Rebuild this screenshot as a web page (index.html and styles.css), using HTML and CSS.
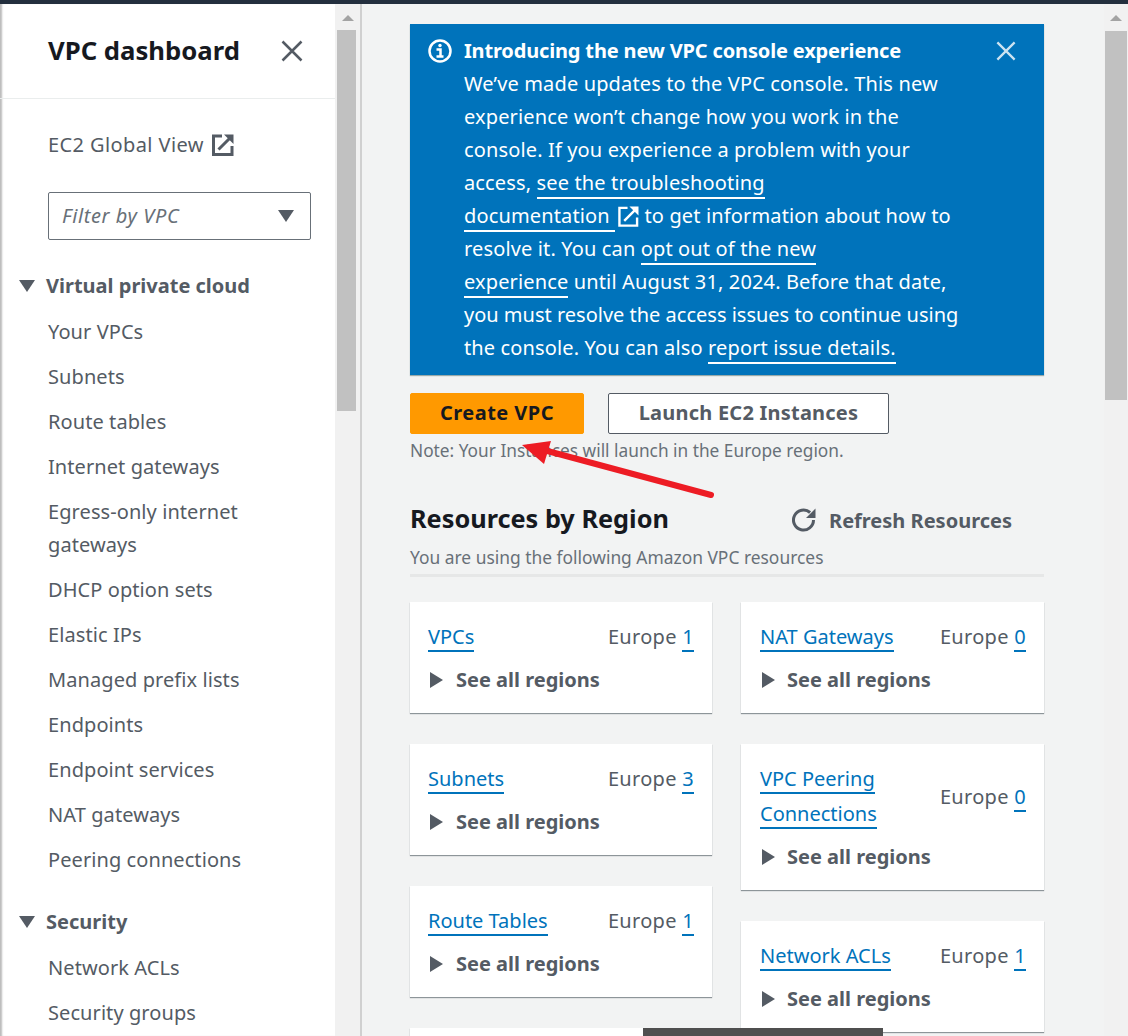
FILE: index.html
```html
<!DOCTYPE html>
<html lang="en">
	<head>
		<meta charset="utf-8">
		<title>VPC dashboard</title>
		<link rel="stylesheet" href="styles.css">
	</head>
	<body>
		<div class="topbar"></div>
		<div class="layout">
			<nav class="sidebar">
				<div class="side-head">
					<h2>VPC dashboard</h2>
					<svg class="side-close" viewBox="0 0 22 22"><path d="M1.500 1.500l19 19M20.500 1.500l-19 19"/></svg>
				</div>
				<div class="side-body">
					<p class="global">EC2 Global View
						<svg class="ext" viewBox="0 0 22 22"><path d="M10 2H1.500v18.500H20V12M6.500 15.500L18.500 3.500"/><path class="fill" d="M12 .5h9.500V10z"/></svg>
					</p>
					<div class="filter">
						<span>Filter by VPC</span>
						<i class="caret-down"></i>
					</div>
					<h3><i class="caret-small"></i>Virtual private cloud</h3>
					<a class="item">Your VPCs</a>
					<a class="item">Subnets</a>
					<a class="item">Route tables</a>
					<a class="item">Internet gateways</a>
					<a class="item">Egress-only internet<br>gateways</a>
					<a class="item">DHCP option sets</a>
					<a class="item">Elastic IPs</a>
					<a class="item">Managed prefix lists</a>
					<a class="item">Endpoints</a>
					<a class="item">Endpoint services</a>
					<a class="item">NAT gateways</a>
					<a class="item">Peering connections</a>
					<h3 class="second"><i class="caret-small"></i>Security</h3>
					<a class="item">Network ACLs</a>
					<a class="item">Security groups</a>
				</div>
			</nav>
			<div class="scrollbar side-bar">
				<i class="arrow-up"></i>
				<div class="thumb side-thumb"></div>
			</div>
			<main class="main">
				<div class="content">
					<section class="alert">
						<svg class="alert-icon" viewBox="0 0 24 24"><circle cx="12" cy="12" r="10.500"/><path d="M8.500 10.500h4v7M8.500 17.500h7"/><circle class="dot" cx="12" cy="6.500" r="1.700"/></svg>
						<div class="alert-text">
							<b>Introducing the new VPC console experience</b><br>
							We’ve made updates to the VPC console. This new<br>
							experience won’t change how you work in the<br>
							console. If you experience a problem with your<br>
							access, <a>see the troubleshooting</a><br>
							<a>documentation&nbsp;</a><svg class="ext-white" viewBox="0 0 22 22"><path d="M10 2H1.500v18.500H20V12M6.500 15.500L18.500 3.500"/><path class="fill" d="M12 .5h9.500V10z"/></svg> to get information about how to<br>
							resolve it. You can <a>opt out of the new</a><br>
							<a>experience</a> until August 31, 2024. Before that date,<br>
							<span class="tight">you must resolve the access issues to continue using</span><br>
							the console. You can also <a>report issue details.</a>
						</div>
						<svg class="alert-close" viewBox="0 0 22 22"><path d="M1.500 1.500l19 19M20.500 1.500l-19 19"/></svg>
					</section>

					<div class="actions">
						<button class="btn primary">Create VPC</button>
						<button class="btn">Launch EC2 Instances</button>
					</div>
					<p class="note">Note: Your Instances will launch in the Europe region.</p>

					<div class="res-head">
						<h2>Resources by Region</h2>
						<span class="refresh">
							<svg viewBox="0 0 24 24"><path d="M21.500 12a10 10 0 1 1-3.400-7.500"/><path class="fill" d="M23.500 .5v9.500H14z"/></svg>
							Refresh Resources
						</span>
					</div>
					<p class="res-sub">You are using the following Amazon VPC resources</p>

					<div class="cards">
						<div class="col">
							<div class="card">
								<div class="card-top"><div class="links"><a>VPCs</a></div><div class="count">Europe <a>1</a></div></div>
								<div class="see"><i class="caret-right"></i>See all regions</div>
							</div>
							<div class="card">
								<div class="card-top"><div class="links"><a>Subnets</a></div><div class="count">Europe <a>3</a></div></div>
								<div class="see"><i class="caret-right"></i>See all regions</div>
							</div>
							<div class="card">
								<div class="card-top"><div class="links"><a>Route Tables</a></div><div class="count">Europe <a>1</a></div></div>
								<div class="see"><i class="caret-right"></i>See all regions</div>
							</div>
							<div class="card"></div>
						</div>
						<div class="col col-right">
							<div class="card">
								<div class="card-top"><div class="links"><a>NAT Gateways</a></div><div class="count">Europe <a>0</a></div></div>
								<div class="see"><i class="caret-right"></i>See all regions</div>
							</div>
							<div class="card">
								<div class="card-top"><div class="links"><a>VPC Peering</a><br><a>Connections</a></div><div class="count">Europe <a>0</a></div></div>
								<div class="see"><i class="caret-right"></i>See all regions</div>
							</div>
							<div class="card">
								<div class="card-top"><div class="links"><a>Network ACLs</a></div><div class="count">Europe <a>1</a></div></div>
								<div class="see"><i class="caret-right"></i>See all regions</div>
							</div>
						</div>
					</div>
				</div>
				<div class="scrollbar main-bar">
					<i class="arrow-up"></i>
					<div class="thumb main-thumb"></div>
				</div>
			</main>
		</div>

		<!-- annotation drawn over the screenshot -->
		<svg class="red-arrow" viewBox="0 0 1128 1036"><path class="shaft" d="M711 495L540 449"/><path class="head" d="M522 445L551 441L544 464z"/></svg>
		<div class="toast"></div>
	</body>
</html>
```

FILE: styles.css
```css
* {
	box-sizing: border-box;
}
html, body {
	height: 100%;
}
body {
	margin: 0;
	height: 1036px;
	overflow: hidden;
	position: relative;
	font-family: "Noto Sans", sans-serif;
	font-size: 20px;
	line-height: 33px;
	color: #545b64;
	background-color: #f2f3f3;
	display: flex;
	flex-direction: column;
}
p, h2, h3 {
	margin: 0;
}
.fill {
	stroke: none;
}
.topbar {
	height: 4px;
	background-color: #232f3e;
	flex: none;
}
.layout {
	flex: 1;
	display: flex;
	min-height: 0;
	overflow: hidden;
}

/* sidebar */
.sidebar {
	width: 335px;
	flex: none;
	background-color: #fff;
	box-shadow: inset 3px 0 2px -1px #bbb;
	overflow: hidden;
	letter-spacing: 0.08px;
}
.side-head {
	height: 95px;
	border-bottom: 1px solid #eaeded;
	padding: 30px 32px 0 48px;
	display: flex;
	justify-content: space-between;
}
.side-head h2 {
	font-size: 25.7px;
	line-height: 34px;
	letter-spacing: 0;
	color: #16191f;
}
.side-close {
	width: 22px;
	height: 22px;
	margin-top: 6px;
	fill: none;
	stroke: #545b64;
	stroke-width: 2.500;
}
.side-body {
	padding: 29px 24px 0 48px;
	position: relative;
}
.global {
	display: flex;
	align-items: center;
	gap: 8px;
	letter-spacing: 0.4px;
}
.ext {
	width: 22px;
	height: 22px;
	fill: #545b64;
	stroke: #545b64;
	stroke-width: 3;
}
.ext path:first-child, .ext-white path:first-child {
	fill: none;
}
.filter {
	width: 263px;
	height: 48px;
	margin: 31px 0 29px;
	border: 1px solid #687078;
	border-radius: 2px;
	padding: 0 16px 2px 13px;
	display: flex;
	align-items: center;
	justify-content: space-between;
	font-style: italic;
	letter-spacing: 0.6px;
	color: #687078;
}
.caret-down {
	border-left: 8px solid transparent;
	border-right: 8px solid transparent;
	border-top: 12px solid #545b64;
	margin-top: 2px;
}
h3 {
	font-size: 20px;
	line-height: 33px;
	font-weight: bold;
	letter-spacing: 0;
	margin: 0 0 13px -2px;
	position: relative;
}
h3.second {
	margin-top: 29px;
}
.caret-small {
	position: absolute;
	left: -27px;
	top: 11px;
	border-left: 8px solid transparent;
	border-right: 8px solid transparent;
	border-top: 12px solid #545b64;
}
.item {
	display: block;
	margin-bottom: 12px;
}

/* scrollbars */
.scrollbar {
	width: 24px;
	flex: none;
	background-color: #f1f1f1;
	position: relative;
	padding: 26px 1px 0;
}
.side-bar {
	width: 27px;
	padding: 26px 4px 0 2px;
	border-right: 2px solid #d0d0d0;
}
.main-bar {
	margin-left: auto;
}
.thumb {
	background-color: #c1c1c1;
}
.side-thumb {
	height: 381px;
}
.main-thumb {
	height: 369px;
	margin-top: 1px;
}
.arrow-up {
	position: absolute;
	left: 6px;
	top: 11px;
	border-left: 6px solid transparent;
	border-right: 6px solid transparent;
	border-bottom: 6px solid #a3a3a3;
}
.side-bar .arrow-up {
	left: 7px;
}

/* main */
.main {
	flex: 1;
	min-width: 0;
	display: flex;
	padding-left: 48px;
}
.content {
	width: 634px;
	flex: none;
	padding-top: 20px;
}
.alert {
	background-color: #0073bb;
	color: #fff;
	height: 351px;
	padding: 10px 18px 11px 18px;
	display: flex;
	box-shadow: 0 1px 1px #9aa;
	position: relative;
}
.alert-icon {
	width: 24px;
	height: 24px;
	flex: none;
	margin: 5px 12px 0 0;
	fill: none;
	stroke: #fff;
	stroke-width: 2.500;
}
.alert-icon .dot {
	fill: #fff;
	stroke: none;
}
.alert-text {
	flex: 1;
	white-space: nowrap;
	letter-spacing: 0.14px;
}
.alert-text b {
	letter-spacing: -0.16px;
}
.alert-text .tight {
	letter-spacing: 0;
}
.alert-text a {
	border-bottom: 2px solid #fff;
	padding-bottom: 1px;
}
.ext-white {
	width: 21px;
	height: 21px;
	vertical-align: -4px;
	fill: #fff;
	stroke: #fff;
	stroke-width: 2.500;
	margin-left: 3px;
}
.alert-close {
	width: 20px;
	height: 20px;
	flex: none;
	margin: 7px 10px 0 0;
	fill: none;
	stroke: #fff;
	stroke-width: 2.500;
	opacity: 0.8;
}
.actions {
	display: flex;
	gap: 24px;
	margin-top: 18px;
}
.btn {
	height: 41px;
	width: 281px;
	font-family: inherit;
	font-size: 20px;
	font-weight: bold;
	letter-spacing: 0.22px;
	color: #545b64;
	background-color: #fff;
	border: 1px solid #545b64;
	border-radius: 2px;
	padding: 0 0 2px;
}
.btn.primary {
	width: 174px;
	letter-spacing: 0.45px;
	background-color: #ff9900;
	border-color: #ff9900;
	color: #16191f;
}
.note {
	font-size: 17.3px;
	line-height: 24px;
	margin-top: 5px;
	color: #687078;
}
.res-head {
	display: flex;
	justify-content: space-between;
	align-items: center;
	margin-top: 31px;
	height: 48px;
	padding-right: 32px;
}
.res-head h2 {
	font-size: 25.3px;
	color: #16191f;
}
.refresh {
	display: flex;
	align-items: center;
	gap: 13px;
	font-weight: bold;
	margin-top: 4px;
}
.refresh svg {
	width: 24px;
	height: 24px;
	fill: none;
	stroke: #545b64;
	stroke-width: 3;
}
.refresh .fill {
	fill: #545b64;
}
.res-sub {
	font-size: 17.4px;
	line-height: 24px;
	color: #687078;
	border-bottom: 3px solid #e6e7e7;
	padding: 3px 0 5px;
}
.cards {
	display: grid;
	grid-template-columns: 302px 303px;
	gap: 29px;
	margin-top: 25px;
}
.col {
	display: flex;
	flex-direction: column;
	gap: 31px;
}
.card {
	background-color: #fff;
	box-shadow: 0 1px 1px #8d9599;
	padding: 17px 18px 17px;
	min-height: 111px;
}
.col-right .card {
	padding-left: 19px;
}
.card-top {
	display: flex;
	justify-content: space-between;
	align-items: center;
	line-height: 35px;
	min-height: 35px;
}
.card a {
	color: #0073bb;
	border-bottom: 2px solid #0073bb;
}
.count {
	letter-spacing: 0.3px;
}
.see {
	font-weight: bold;
	line-height: 33px;
	margin-top: 9px;
	display: flex;
	align-items: center;
}
.caret-right {
	border-top: 8px solid transparent;
	border-bottom: 8px solid transparent;
	border-left: 13px solid #545b64;
	margin: 0 13px 0 2px;
}
.col-right .caret-right {
	margin-right: 12px;
}

/* over everything */
.red-arrow {
	position: absolute;
	left: 0;
	top: 0;
	width: 1128px;
	height: 1036px;
	pointer-events: none;
}
.red-arrow .shaft {
	stroke: #ed1c24;
	stroke-width: 6;
	stroke-linecap: round;
	fill: none;
}
.red-arrow .head {
	fill: #ed1c24;
}
.toast {
	position: absolute;
	left: 643px;
	top: 1028px;
	width: 240px;
	height: 8px;
	background-color: #4f4f4f;
}
```
